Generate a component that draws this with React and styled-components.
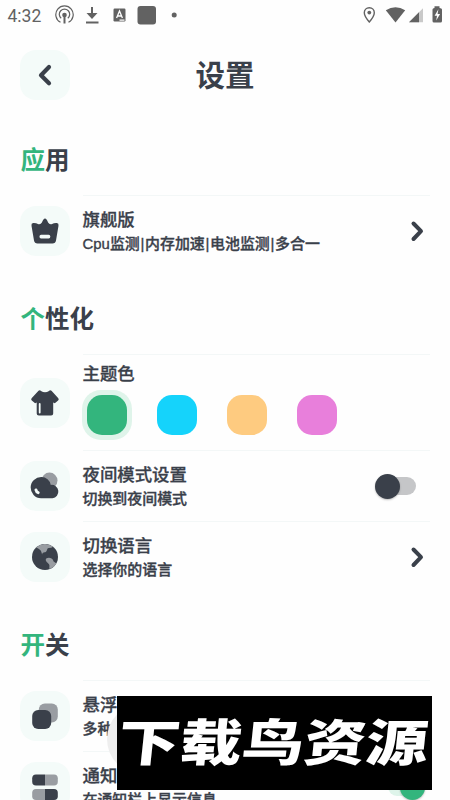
import { useState } from "react";
import styled, { createGlobalStyle } from "styled-components";

const INK = '#3a404a'
const GREEN = '#33b57d'

const GlobalStyle = createGlobalStyle`
* {
    box-sizing: border-box;
}
body {
    margin: 0;
    background-color: #fefefe;
    font-family: Roboto, "Noto Sans CJK SC", sans-serif;
    color: ${INK};
}
`

const Phone = styled.div`
    position: relative;
    width: 450px;
    height: 800px;
    overflow: hidden;
    background-color: #fefefe;
`

const StatusBar = styled.div`
    display: flex;
    align-items: center;
    height: 30px;
    padding: 0 7px 0 7.5px;
    color: #626262;
    > svg {
        display: block;
        flex: none;
    }
`

const Clock = styled.div`
    width: 47.5px;
    font-size: 17.5px;
    line-height: 30px;
    padding-top: 2px;
`

const Spacer = styled.div`
    flex: 1;
`

const Header = styled.header`
    display: grid;
    grid-template-columns: 50px 1fr 50px;
    align-items: start;
    height: 77px;
    padding: 20px 20px 7px;
    > h1 {
        margin: 0;
        padding-top: 1px;
        font-size: 29.5px;
        font-weight: 700;
        line-height: 50px;
        text-align: center;
    }
`

const IconBox = styled.div`
    display: flex;
    align-items: center;
    justify-content: center;
    flex: none;
    width: 50px;
    height: 50px;
    border-radius: 16px;
    background-color: #f4fbf9;
    > svg {
        display: block;
    }
`

const SectionTitle = styled.h2`
    height: 88px;
    margin: 0;
    padding: 36px 20.5px 0;
    font-size: 24.5px;
    font-weight: 700;
    line-height: 35px;
    &::first-letter {
        color: ${GREEN};
    }
`

const Row = styled.div`
    display: flex;
    align-items: center;
    height: ${({ $tall }) => $tall ? '96px' : '71px'};
    padding: 0 20px;
    > ${IconBox} {
        margin-top: 1px;
    }
`

const RowBody = styled.div`
    display: flex;
    align-items: center;
    justify-content: space-between;
    flex: 1;
    height: 100%;
    margin-left: 12.5px;
    padding-top: ${({ $flush }) => $flush ? '0' : '2px'};
    border-top: 1px solid #f3f7f7;
`

const RowTitle = styled.div`
    font-size: 17.4px;
    font-weight: 500;
    line-height: 24px;
    white-space: nowrap;
    -webkit-text-stroke: 0.3px ${INK};
`

const RowText = styled.div`
    font-family: "Liberation Sans", "Noto Sans CJK SC", sans-serif;
    font-size: 14.95px;
    font-weight: 500;
    line-height: 24px;
    white-space: nowrap;
    -webkit-text-stroke: 0.35px ${INK};
`

const Bar = styled.span`
    padding: 0 0.7px;
`

const Theme = styled.div`
    display: flex;
    flex-direction: column;
    height: 100%;
    padding-top: 7px;
`

const Swatches = styled.div`
    display: flex;
    gap: 20px;
    margin: 4px 0 0 -0.5px;
`

const Swatch = styled.button`
    width: 50px;
    height: 50px;
    padding: 5px;
    border: 0;
    border-radius: 19px;
    background-color: ${({ $selected }) => $selected ? '#dff4ea' : 'transparent'};
    cursor: pointer;
    &::before {
        content: '';
        display: block;
        width: 40px;
        height: 40px;
        border-radius: 15px;
        background-color: ${({ $color }) => $color};
    }
`

const Switch = styled.button`
    display: flex;
    align-items: center;
    justify-content: ${({ $on }) => $on ? 'flex-end' : 'flex-start'};
    width: 36px;
    height: 18px;
    margin-right: ${({ $on }) => $on ? '6px' : '14px'};
    margin-bottom: 2px;
    padding: 0;
    border: 0;
    border-radius: 9px;
    background-color: ${({ $on }) => $on ? '#def4ea' : '#c5c6c8'};
    cursor: pointer;
    &::before {
        content: '';
        flex: none;
        width: 25px;
        height: 25px;
        margin: ${({ $on }) => $on ? '0 -1px 0 0' : '0 0 0 -5px'};
        border-radius: 50%;
        background-color: ${({ $on }) => $on ? GREEN : INK};
        box-shadow: 0 1px 2px rgba(0, 0, 0, 0.25);
    }
`

const Arrow = styled.svg`
    display: block;
    margin-right: 5px;
`

const Bubble = styled.div`
    position: absolute;
    left: 107px;
    top: 704px;
    width: 70px;
    height: 70px;
    border-radius: 50%;
    background-color: #eeeeee;
`

const Banner = styled.div`
    position: absolute;
    left: 117px;
    top: 696px;
    width: 315px;
    height: 94px;
    display: flex;
    align-items: center;
    justify-content: center;
    background-color: #000;
    color: #fff;
    > span {
        font-size: 50px;
        font-weight: 900;
        line-height: 94px;
        white-space: nowrap;
        transform: translate(-2px, 1px) skewX(-6deg) scaleX(1.24);
    }
`

const ChevronLeft = () => (
    <svg width="16" height="24" viewBox="0 0 16 24" fill="none" stroke={INK} strokeWidth="4.2" strokeLinecap="round" strokeLinejoin="round">
        <path d="M12 4 4 12.2l8 8" />
    </svg>
)

const ChevronRight = () => (
    <Arrow width="16" height="24" viewBox="0 0 16 24" fill="none" stroke={INK} strokeWidth="4" strokeLinecap="round" strokeLinejoin="round">
        <path d="M4.5 3.5 12 11.2l-7.5 7.8" />
    </Arrow>
)

const CrownIcon = () => (
    <svg width="30" height="30" viewBox="0 0 30 30">
        <path d="M3.200 7q2.300-.3 5.300 1.200 2.200.5 3.400-1.700Q13.500 2.700 15 2.600q1.600.1 3.100 3.900 1.200 2.200 3.400 1.700Q24.500 6.700 26.800 7q2.200.4 1.700 2.700L26 24.500Q25.500 27.500 22.500 27.500H7.500Q4.500 27.500 4 24.500L1.500 9.700Q1 7.400 3.200 7Z" fill={INK} />
        <rect x="9.500" y="18.800" width="10.800" height="3.600" rx="1.600" fill="#f4fbf9" />
    </svg>
)

const ShirtIcon = () => (
    <svg width="30" height="30" viewBox="0 0 30 30">
        <path d="M8.500 2.800Q10 1.800 11 3q4 2.500 8 0 1-1.200 2.500-.2l6.800 7.400q1 1.200-.2 2.300l-3.300 2.700-1.600-.8v11q0 2.100-2.100 2.100H8.800q-2.100 0-2.100-2.100V14.500l-1.600.7-3.300-2.700Q.600 11.400 1.600 10.200Z" fill={INK} />
        <path d="M9.700 16v8.500" stroke="#f4fbf9" strokeWidth="1.800" strokeLinecap="round" />
    </svg>
)

const CloudIcon = () => (
    <svg width="30" height="30" viewBox="0 0 30 30">
        <circle cx="19.500" cy="9.600" r="8" fill="#999da2" />
        <path d="M11.500 6a9.700 9.700 0 0 1 9.300 7.900A6.700 6.700 0 0 1 22.500 27.200H11A10.600 10.600 0 0 1 11.500 6Z" fill={INK} />
        <path d="M6 19q.4 2 2.200 2.600" fill="none" stroke="#f4fbf9" strokeWidth="3" strokeLinecap="round" />
    </svg>
)

const GlobeIcon = () => (
    <svg width="30" height="30" viewBox="0 0 30 30">
        <circle cx="15" cy="15" r="13" fill={INK} />
        <path d="M6.200 5.500A13 13 0 0 1 23 4.700q-1.300 1.400-4.300 1.400c-2 .2-1.200 3-3 3.900-1.800.8-2.800-.3-3.600 2.400-.7-2-.6-3.800-2.500-5Q8.500 6.500 6.200 5.500Z" fill="#999da2" />
        <path d="M16.200 16.500c2.200-1.500 6.200-.8 6.900 1.800.4 2 1.900 1.800 3.400 3.200a13 13 0 0 1-6.800 5.600c-1-1.500.4-3.100-.7-4.900-1.700-1.700-4.300-3.700-2.800-5.700Z" fill="#999da2" />
    </svg>
)

const FloatIcon = () => (
    <svg width="30" height="30" viewBox="0 0 30 30">
        <rect x="8.800" y="2.400" width="19" height="19" rx="6" fill="#999da2" />
        <rect x="2.200" y="9" width="19" height="19" rx="6" fill={INK} />
    </svg>
)

const BarsIcon = () => (
    <svg width="30" height="30" viewBox="0 0 30 30">
        <path d="M15 2.500h-9q-3.800 0-3.800 3.800v3.400q0 3.800 3.800 3.800h9Z" fill={INK} />
        <path d="M15 2.500h9q3.800 0 3.800 3.800v3.400q0 3.800-3.800 3.800h-9Z" fill="#999da2" />
        <path d="M15 17h-9q-3.800 0-3.800 3.800v3.400Q2.200 28 6 28h9Z" fill="#999da2" />
        <path d="M15 17h9q3.800 0 3.800 3.800v3.400q0 3.800-3.800 3.800h-9Z" fill={INK} />
    </svg>
)

const StatusLeft = () => (
    <svg width="126" height="30" viewBox="55 0 126 30" fill="none" stroke="#626262">
        <path d="M60.500 22.300a8.700 8.700 0 1 1 8 0M61.200 18.300a5.200 5.200 0 1 1 6.600 0" strokeWidth="1.200" />
        <circle cx="64.500" cy="15" r="2.300" fill="#626262" stroke="none" />
        <path d="M64.500 15v8.500" strokeWidth="2" />
        <path d="M92 7v8M86 22.500h12.500" strokeWidth="2" />
        <path d="m86.500 13 5.500 6 5.500-6Z" fill="#626262" stroke="none" />
        <rect x="113.500" y="8.500" width="12" height="13" rx="1.200" fill="#626262" stroke="none" />
        <path d="m116.600 18 2.900-7 2.900 7M117.600 16h3.800M119.500 20.200h5" stroke="#fefefe" strokeWidth="1.300" />
        <rect x="137.500" y="6" width="18.500" height="18.500" rx="3" fill="#626262" stroke="none" />
        <circle cx="174.200" cy="15" r="2.500" fill="#626262" stroke="none" />
    </svg>
)

const StatusRight = () => (
    <svg width="84" height="30" viewBox="359 0 84 30">
        <path d="M369.300 7.700c-3 0-5 2.200-5 5 0 3.400 5 9.300 5 9.300s5-5.900 5-9.300c0-2.800-2-5-5-5Z" fill="none" stroke="#626262" strokeWidth="1.400" />
        <circle cx="369.300" cy="12.600" r="1.900" fill="#626262" />
        <path d="M385.800 10.300q9.700-6.200 19.400 0L395.500 22.400Z" fill="#626262" />
        <path d="M409 22.300 423 8.300v14Z" fill="#c9c9c9" />
        <path d="M409 22.300 419 12.300v10Z" fill="#626262" />
        <path d="M434.500 8V6.300h5V8q2.500 0 2.500 1.500v11.500q0 1.500-1.500 1.500h-6.500q-1.500 0-1.500-1.500V9.500q0-1.500 2-1.500Z" fill="#626262" />
        <path d="m438.400 9.300-3.800 6.400h2.400l-.8 4.700 3.900-6.500h-2.500Z" fill="#fefefe" />
    </svg>
)

const colors = ['#33b57d', '#15d3fb', '#fecb80', '#e87fdb']

const Setting = ({ icon, title, text, children }) => (
    <Row>
        <IconBox>{icon}</IconBox>
        <RowBody>
            <div>
                <RowTitle>{title}</RowTitle>
                <RowText>
                    {text.split('|').map((part, index) => (
                        <span key={part}>{index > 0 && <Bar>|</Bar>}{part}</span>
                    ))}
                </RowText>
            </div>
            {children}
        </RowBody>
    </Row>
)

const App = () => {
    const [color, setColor] = useState(colors[0])
    const [night, setNight] = useState(false)
    const [notice, setNotice] = useState(true)

    return (
        <Phone>
            <GlobalStyle />
            <StatusBar>
                <Clock>4:32</Clock>
                <StatusLeft />
                <Spacer />
                <StatusRight />
            </StatusBar>
            <Header>
                <IconBox><ChevronLeft /></IconBox>
                <h1>设置</h1>
            </Header>

            <SectionTitle>应用</SectionTitle>
            <Setting icon={<CrownIcon />} title="旗舰版" text="Cpu监测|内存加速|电池监测|多合一">
                <ChevronRight />
            </Setting>

            <SectionTitle>个性化</SectionTitle>
            <Row $tall>
                <IconBox><ShirtIcon /></IconBox>
                <RowBody $flush>
                    <Theme>
                        <RowTitle>主题色</RowTitle>
                        <Swatches>
                            {colors.map((item) => (
                                <Swatch
                                    key={item}
                                    $color={item}
                                    $selected={item === color}
                                    onClick={() => setColor(item)}
                                />
                            ))}
                        </Swatches>
                    </Theme>
                </RowBody>
            </Row>
            <Setting icon={<CloudIcon />} title="夜间模式设置" text="切换到夜间模式">
                <Switch $on={night} onClick={() => setNight((prev) => !prev)} />
            </Setting>
            <Setting icon={<GlobeIcon />} title="切换语言" text="选择你的语言">
                <ChevronRight />
            </Setting>

            <SectionTitle>开关</SectionTitle>
            <Setting icon={<FloatIcon />} title="悬浮" text="多种" />
            <Setting icon={<BarsIcon />} title="通知" text="在通知栏上显示信息">
                <Switch $on={notice} onClick={() => setNotice((prev) => !prev)} />
            </Setting>

            <Bubble />
            <Banner><span>下载鸟资源</span></Banner>
        </Phone>
    );
}

export default App;
